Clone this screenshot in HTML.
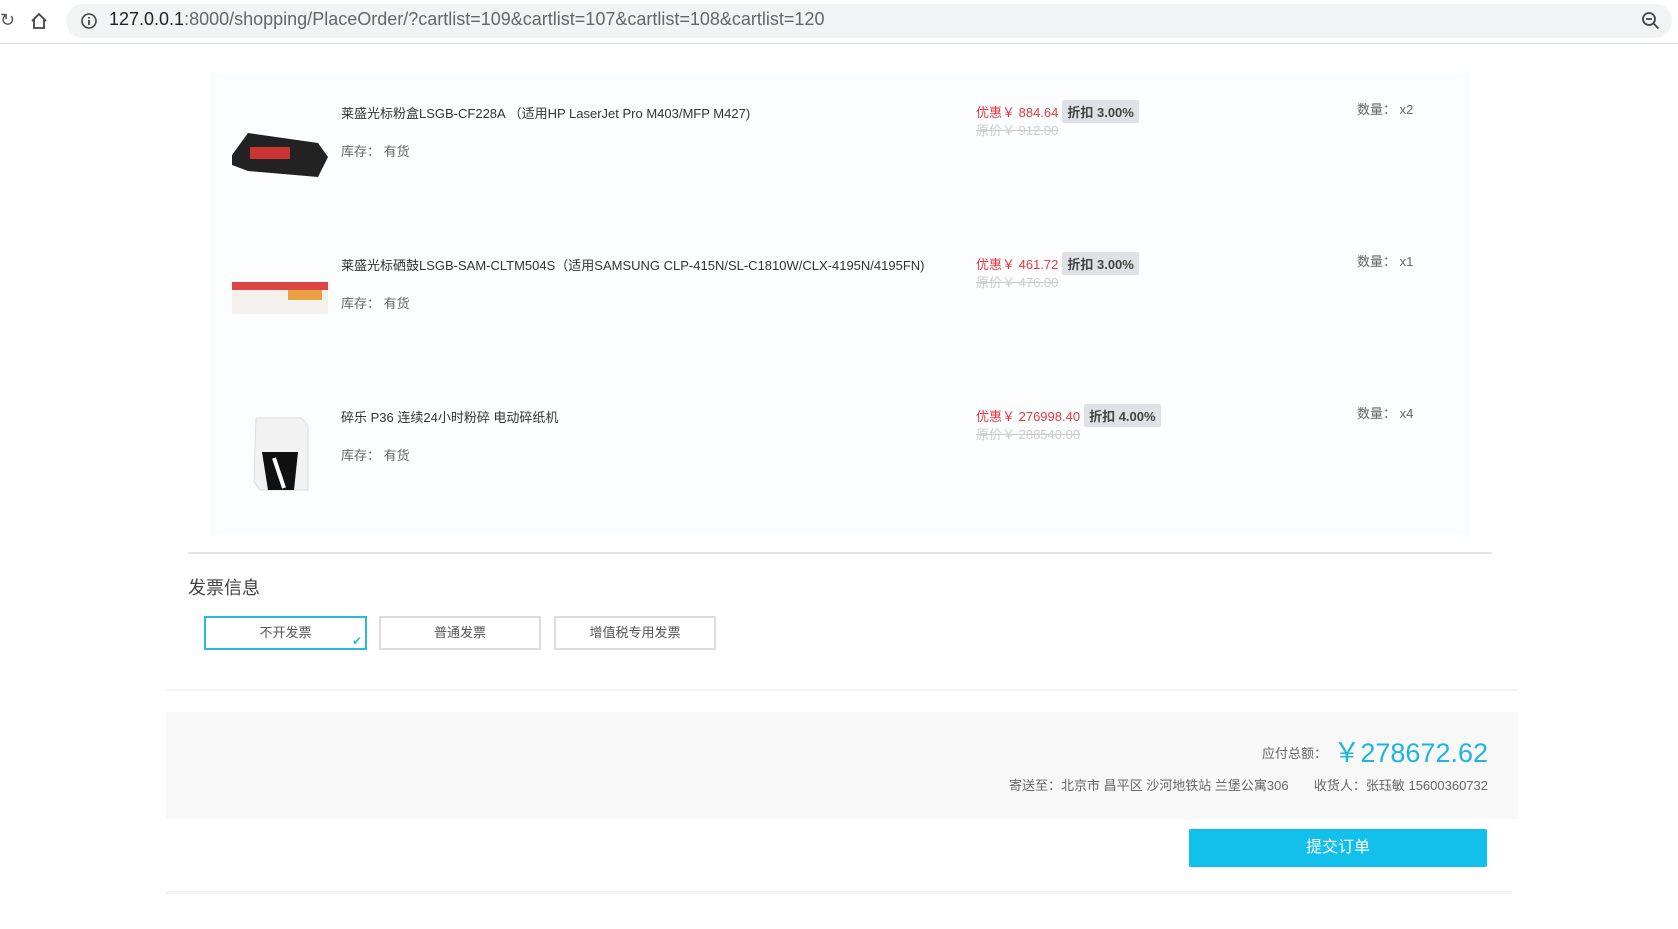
<!DOCTYPE html>
<html><head><meta charset="utf-8">
<style>
*{margin:0;padding:0;box-sizing:border-box}
body{width:1678px;height:929px;background:#fff;font-family:"Liberation Sans","Noto Sans CJK SC",sans-serif;position:relative;overflow:hidden;color:#555}
.abs{position:absolute;white-space:nowrap}
.bar{position:absolute;left:0;top:0;width:1678px;height:44px;background:#fff;border-bottom:1px solid #ddd}
.url{position:absolute;left:66px;top:4px;width:1606px;height:34px;background:#f1f3f4;border-radius:17px}
.card{position:absolute;left:209px;top:73px;width:1262px;height:462px;background:#fcfdff}
.t{font-size:13px;color:#333}
.s{font-size:13px;color:#666}
.p{font-size:13px;color:#e4393c}
.o{font-size:13px;color:#ccc;text-decoration:line-through}
.tag{display:inline-block;background:#dfe1e6;color:#444;font-weight:bold;font-size:13px;padding:2px 5px;border-radius:2px;margin-left:4px}
.btn{position:absolute;top:616px;height:34px;border:2px solid #ddd;font-size:13px;color:#555;text-align:center;line-height:30px;background:#fff}
</style></head><body>
<div class="bar">
<div class="abs" style="left:0;top:10px;font-size:18px;color:#555">↻</div>
<svg class="abs" style="left:30px;top:12px" width="18" height="18" viewBox="0 0 18 18"><path d="M2 9L9 2l7 7M4 7v9h10V7" fill="none" stroke="#444" stroke-width="1.8"/></svg>
<div class="url"></div>
<svg class="abs" style="left:80px;top:12px" width="18" height="18" viewBox="0 0 18 18"><circle cx="9" cy="9" r="7" fill="none" stroke="#444" stroke-width="1.6"/><path d="M9 8v5M9 5v1.5" stroke="#444" stroke-width="1.8"/></svg>
<div class="abs" style="left:109px;top:9px;font-size:18px;color:#222">127.0.0.1<span style="color:#666">:8000/shopping/PlaceOrder/?cartlist=109&amp;cartlist=107&amp;cartlist=108&amp;cartlist=120</span></div>
<svg class="abs" style="left:1641px;top:11px" width="20" height="20" viewBox="0 0 20 20"><circle cx="8" cy="8" r="6" fill="none" stroke="#444" stroke-width="1.8"/><path d="M12.5 12.5l5 5M5 8h6" stroke="#444" stroke-width="1.8"/></svg>
</div>
<div class="card"></div>

<svg class="abs" style="left:228px;top:125px" width="104" height="56" viewBox="0 0 104 56"><path d="M4 30L20 8l70 10 10 14-10 20L20 46 4 40z" fill="#222"/><rect x="22" y="22" width="40" height="12" fill="#c33"/></svg>
<div class="abs t" style="left:341px;top:103px">莱盛光标粉盒LSGB-CF228A （适用HP LaserJet Pro M403/MFP M427)</div>
<div class="abs s" style="left:341px;top:141px">库存：&nbsp;有货</div>
<div class="abs" style="left:976px;top:100px"><span class="p">优惠￥ 884.64</span><span class="tag">折扣 3.00%</span></div>
<div class="abs o" style="left:976px;top:120px">原价￥ 912.00</div>
<div class="abs s" style="left:1357px;top:99px">数量：&nbsp;x2</div>

<svg class="abs" style="left:228px;top:276px" width="104" height="44" viewBox="0 0 104 44"><rect x="4" y="6" width="96" height="32" fill="#f4f0ec"/><rect x="4" y="6" width="96" height="8" fill="#d44"/><rect x="60" y="14" width="34" height="10" fill="#e9a040"/></svg>
<div class="abs t" style="left:341px;top:255px">莱盛光标硒鼓LSGB-SAM-CLTM504S（适用SAMSUNG CLP-415N/SL-C1810W/CLX-4195N/4195FN)</div>
<div class="abs s" style="left:341px;top:293px">库存：&nbsp;有货</div>
<div class="abs" style="left:976px;top:252px"><span class="p">优惠￥ 461.72</span><span class="tag">折扣 3.00%</span></div>
<div class="abs o" style="left:976px;top:272px">原价￥ 476.00</div>
<div class="abs s" style="left:1357px;top:251px">数量：&nbsp;x1</div>

<svg class="abs" style="left:248px;top:412px" width="66" height="86" viewBox="0 0 66 86"><path d="M8 6h46l6 8v64H12L6 70z" fill="#f2f2f2" stroke="#ddd"/><path d="M14 40h36l-4 38H20z" fill="#111"/><path d="M26 46l10 30" stroke="#fff" stroke-width="4"/></svg>
<div class="abs t" style="left:341px;top:407px">碎乐 P36 连续24小时粉碎 电动碎纸机</div>
<div class="abs s" style="left:341px;top:445px">库存：&nbsp;有货</div>
<div class="abs" style="left:976px;top:404px"><span class="p">优惠￥ 276998.40</span><span class="tag">折扣 4.00%</span></div>
<div class="abs o" style="left:976px;top:424px">原价￥ 288540.00</div>
<div class="abs s" style="left:1357px;top:403px">数量：&nbsp;x4</div>

<div class="abs" style="left:188px;top:552px;width:1304px;height:2px;background:#e4e4e4"></div>
<div class="abs" style="left:188px;top:574px;font-size:18px;color:#444">发票信息</div>
<div class="btn" style="left:204px;width:163px;border-color:#2bb8d9">不开发票<span style="position:absolute;right:3px;bottom:-8px;color:#2bb8d9;font-size:12px">✔</span></div>
<div class="btn" style="left:379px;width:162px">普通发票</div>
<div class="btn" style="left:554px;width:162px">增值税专用发票</div>
<div class="abs" style="left:166px;top:689px;width:1352px;height:2px;background:#f3f3f3"></div>

<div class="abs" style="left:166px;top:712px;width:1352px;height:107px;background:#f8f8f8"></div>
<div class="abs" style="left:1262px;top:743px;font-size:13px;color:#666">应付总额：</div>
<div class="abs" style="right:190px;top:731px;font-size:27px;color:#1fb3e0">￥278672.62</div>
<div class="abs" style="right:190px;top:775px;font-size:13px;color:#666">寄送至：北京市 昌平区 沙河地铁站 兰堡公寓306 &nbsp;&nbsp;&nbsp;&nbsp;&nbsp; 收货人：张珏敏 15600360732</div>
<div class="abs" style="left:1189px;top:829px;width:298px;height:38px;background:#13c0ec;border-radius:2px;color:#fff;font-size:16px;text-align:center;line-height:38px">提交订单</div>
<div class="abs" style="left:166px;top:891px;width:1346px;height:3px;background:#f2f2f2"></div>
</body></html>
